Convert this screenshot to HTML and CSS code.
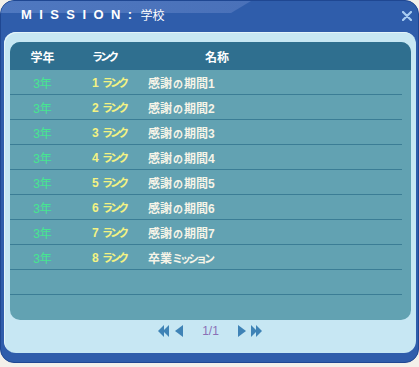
FILE: index.html
```html
<!DOCTYPE html>
<html lang="ja">
<head>
    <meta charset="UTF-8">
    <title>MISSION</title>
    <link rel="stylesheet" href="styles.css">
</head>
<body>
    <div class="window">
        <div class="titlebar">
            <span class="title">MISSION:</span><span class="title-sub">学校</span>
            <svg class="close" width="10" height="10" viewBox="0 0 10 10">
                <path d="M1 1 L9 9 M9 1 L1 9" stroke="#a9cdf2" stroke-width="2.2" stroke-linecap="round"/>
            </svg>
        </div>
        <div class="panel">
            <div class="table">
                <div class="row head">
                    <div class="c-year">学年</div>
                    <div class="c-rank"><span class="kana">ランク</span></div>
                    <div class="c-name head-name">名称</div>
                </div>
                <div class="row">
                    <div class="c-year year">3年</div>
                    <div class="c-rank rank">1 <span class="kana">ランク</span></div>
                    <div class="c-name name">感謝<span class="no">の</span>期間1</div>
                </div>
                <div class="row">
                    <div class="c-year year">3年</div>
                    <div class="c-rank rank">2 <span class="kana">ランク</span></div>
                    <div class="c-name name">感謝<span class="no">の</span>期間2</div>
                </div>
                <div class="row">
                    <div class="c-year year">3年</div>
                    <div class="c-rank rank">3 <span class="kana">ランク</span></div>
                    <div class="c-name name">感謝<span class="no">の</span>期間3</div>
                </div>
                <div class="row">
                    <div class="c-year year">3年</div>
                    <div class="c-rank rank">4 <span class="kana">ランク</span></div>
                    <div class="c-name name">感謝<span class="no">の</span>期間4</div>
                </div>
                <div class="row">
                    <div class="c-year year">3年</div>
                    <div class="c-rank rank">5 <span class="kana">ランク</span></div>
                    <div class="c-name name">感謝<span class="no">の</span>期間5</div>
                </div>
                <div class="row">
                    <div class="c-year year">3年</div>
                    <div class="c-rank rank">6 <span class="kana">ランク</span></div>
                    <div class="c-name name">感謝<span class="no">の</span>期間6</div>
                </div>
                <div class="row">
                    <div class="c-year year">3年</div>
                    <div class="c-rank rank">7 <span class="kana">ランク</span></div>
                    <div class="c-name name">感謝<span class="no">の</span>期間7</div>
                </div>
                <div class="row">
                    <div class="c-year year">3年</div>
                    <div class="c-rank rank">8 <span class="kana">ランク</span></div>
                    <div class="c-name name">卒業<span class="kana">ミッション</span></div>
                </div>
                <div class="row"></div>
                <div class="row last"></div>
            </div>
            <div class="pager">
                <svg class="arrow" width="12" height="12" viewBox="0 0 12 12">
                    <polygon points="0,6 6,0 6,12" fill="#3f83b6"/>
                    <polygon points="5,6 11,0 11,12" fill="#3f83b6"/>
                </svg>
                <svg class="arrow gap-s" width="9" height="12" viewBox="0 0 9 12">
                    <polygon points="0,6 8,0 8,12" fill="#3f83b6"/>
                </svg>
                <span class="page">1/1</span>
                <svg class="arrow" width="9" height="12" viewBox="0 0 9 12">
                    <polygon points="1,0 9,6 1,12" fill="#3f83b6"/>
                </svg>
                <svg class="arrow gap-s" width="12" height="12" viewBox="0 0 12 12">
                    <polygon points="0,0 6,6 0,12" fill="#3f83b6"/>
                    <polygon points="5,0 11,6 5,12" fill="#3f83b6"/>
                </svg>
            </div>
        </div>
    </div>
</body>
</html>
```
FILE: styles.css
```css
body {
    margin: 0;
    padding: 0;
    background: #f3f0ea;
    font-family: "Liberation Sans", "Noto Sans CJK JP", sans-serif;
}
.window {
    position: relative;
    width: 419px;
    height: 363px;
    box-sizing: border-box;
    background: #2f5dab;
    border: 1px solid #1f4792;
    border-radius: 14px;
    overflow: hidden;
}
.window::before {
    content: "";
    position: absolute;
    left: 0;
    top: 0;
    width: 250px;
    height: 12px;
    background: linear-gradient(to right, #4f78c0, #4a71b9);
    clip-path: polygon(0 0, 100% 0, 92% 100%, 0 100%);
}
.titlebar {
    position: relative;
    height: 31px;
    display: flex;
    align-items: center;
    padding: 0 0 4px 20px;
    box-sizing: border-box;
    color: #ffffff;
}
.title {
    font-size: 13px;
    font-weight: bold;
    letter-spacing: 7.4px;
}
.title-sub {
    font-size: 12px;
    margin-left: 1px;
}
.close {
    margin-left: auto;
    margin-right: 6px;
    margin-top: 2px;
}
.panel {
    margin-left: 3px;
    width: 412px;
    height: 321px;
    box-sizing: border-box;
    padding: 10px 5px 0 6px;
    background: #c7e7f3;
    border-radius: 12px;
    box-shadow: inset 1px 1px 0 #e3f4fa;
}
.table {
    height: 278px;
    background: #62a2b2;
    border-radius: 10px;
    overflow: hidden;
}
.row {
    display: grid;
    grid-template-columns: 65px 73px 1fr;
    align-items: center;
    height: 25px;
    box-sizing: border-box;
    margin-right: 9px;
    border-bottom: 1px solid #3b7d95;
    font-size: 12px;
    font-weight: bold;
}
.row.head {
    height: 28px;
    margin-right: 0;
    background: #2f6f8f;
    border-bottom: none;
    color: #ffffff;
}
.row.last {
    border-bottom: none;
}
.c-year {
    text-align: center;
}
.c-rank {
    padding-left: 17px;
}
.head-name {
    padding-left: 57px;
}
.kana {
    font-size: 11px;
    letter-spacing: -3px;
}
.no {
    font-size: 10px;
    margin: 0 1px;
}
.year {
    color: #46e690;
    font-weight: normal;
}
.rank {
    color: #f3f283;
}
.name {
    color: #f6f4e8;
}
.pager {
    height: 33px;
    display: flex;
    justify-content: center;
    align-items: flex-start;
    padding-top: 5px;
    box-sizing: border-box;
}
.gap-s {
    margin-left: 5px;
}
.page {
    margin: -1px 18px 0 18px;
    font-size: 12px;
    color: #8a70b6;
    line-height: 14px;
}
```
